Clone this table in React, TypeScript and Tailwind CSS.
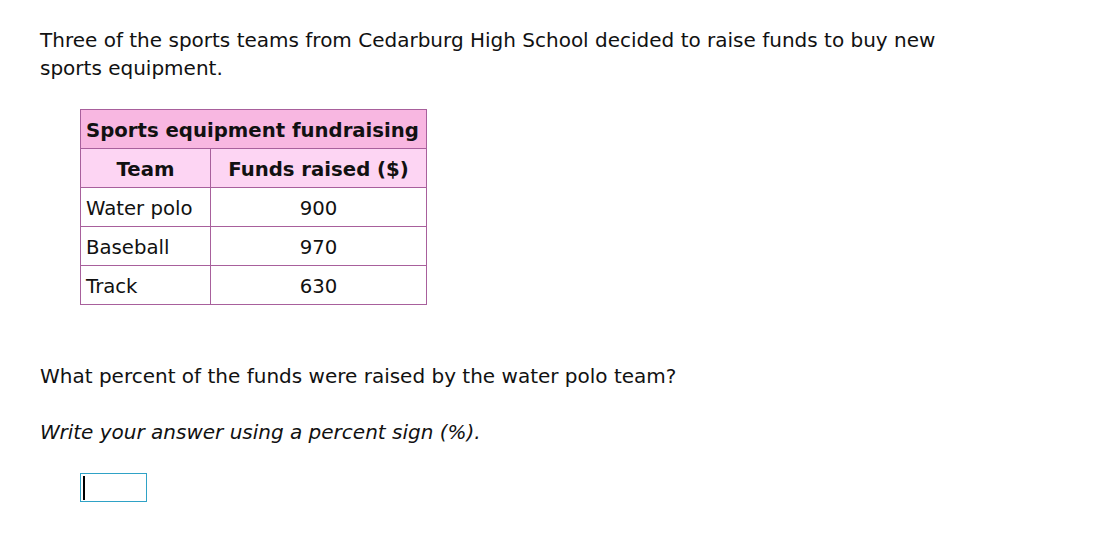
import React from "react";

export default function App() {
  const rows = [
    ["Water polo", "900"],
    ["Baseball", "970"],
    ["Track", "630"],
  ];
  return (
    <div
      className="min-h-[535px] w-[1099px] bg-white text-[20px] text-[#111]"
      style={{ fontFamily: '"DejaVu Sans", Verdana, sans-serif' }}
    >
      <div className="pl-[40px] pt-[26px]">
        <p className="w-[920px] leading-[28px]">
          Three of the sports teams from Cedarburg High School decided to raise funds to buy new sports equipment.
        </p>
        <div className="ml-[40px] mt-[27px]">
          <table className="w-[347px] border-collapse border border-[#a8609c] text-[19.7px]">
            <thead>
              <tr>
                <th colSpan={2} className="h-[39px] whitespace-nowrap border border-[#a8609c] bg-[#f8b7e1] pl-[5px] pr-[3px] pt-[3px] text-left font-bold">
                  Sports equipment fundraising
                </th>
              </tr>
              <tr>
                <th className="h-[39px] w-[130px] border border-[#a8609c] bg-[#fdd5f3] pt-[3px] font-bold">Team</th>
                <th className="h-[39px] whitespace-nowrap border border-[#a8609c] bg-[#fdd5f3] pt-[3px] font-bold">Funds raised ($)</th>
              </tr>
            </thead>
            <tbody>
              {rows.map(([t, v]) => (
                <tr key={t}>
                  <td className="h-[39px] border border-[#a8609c] px-[5px] pt-[3px] text-left">{t}</td>
                  <td className="h-[39px] border border-[#a8609c] pt-[3px] text-center">{v}</td>
                </tr>
              ))}
            </tbody>
          </table>
        </div>
        <p className="mt-[57px] leading-[28px]">What percent of the funds were raised by the water polo team?</p>
        <p className="mt-[28px] italic leading-[28px]">Write your answer using a percent sign (%).</p>
        <div className="ml-[40px] mt-[27px] flex h-[29px] w-[67px] items-center border border-[#2fa2c6] pl-[2px]">
          <div className="h-[24px] w-[2px] bg-black" />
        </div>
      </div>
    </div>
  );
}
